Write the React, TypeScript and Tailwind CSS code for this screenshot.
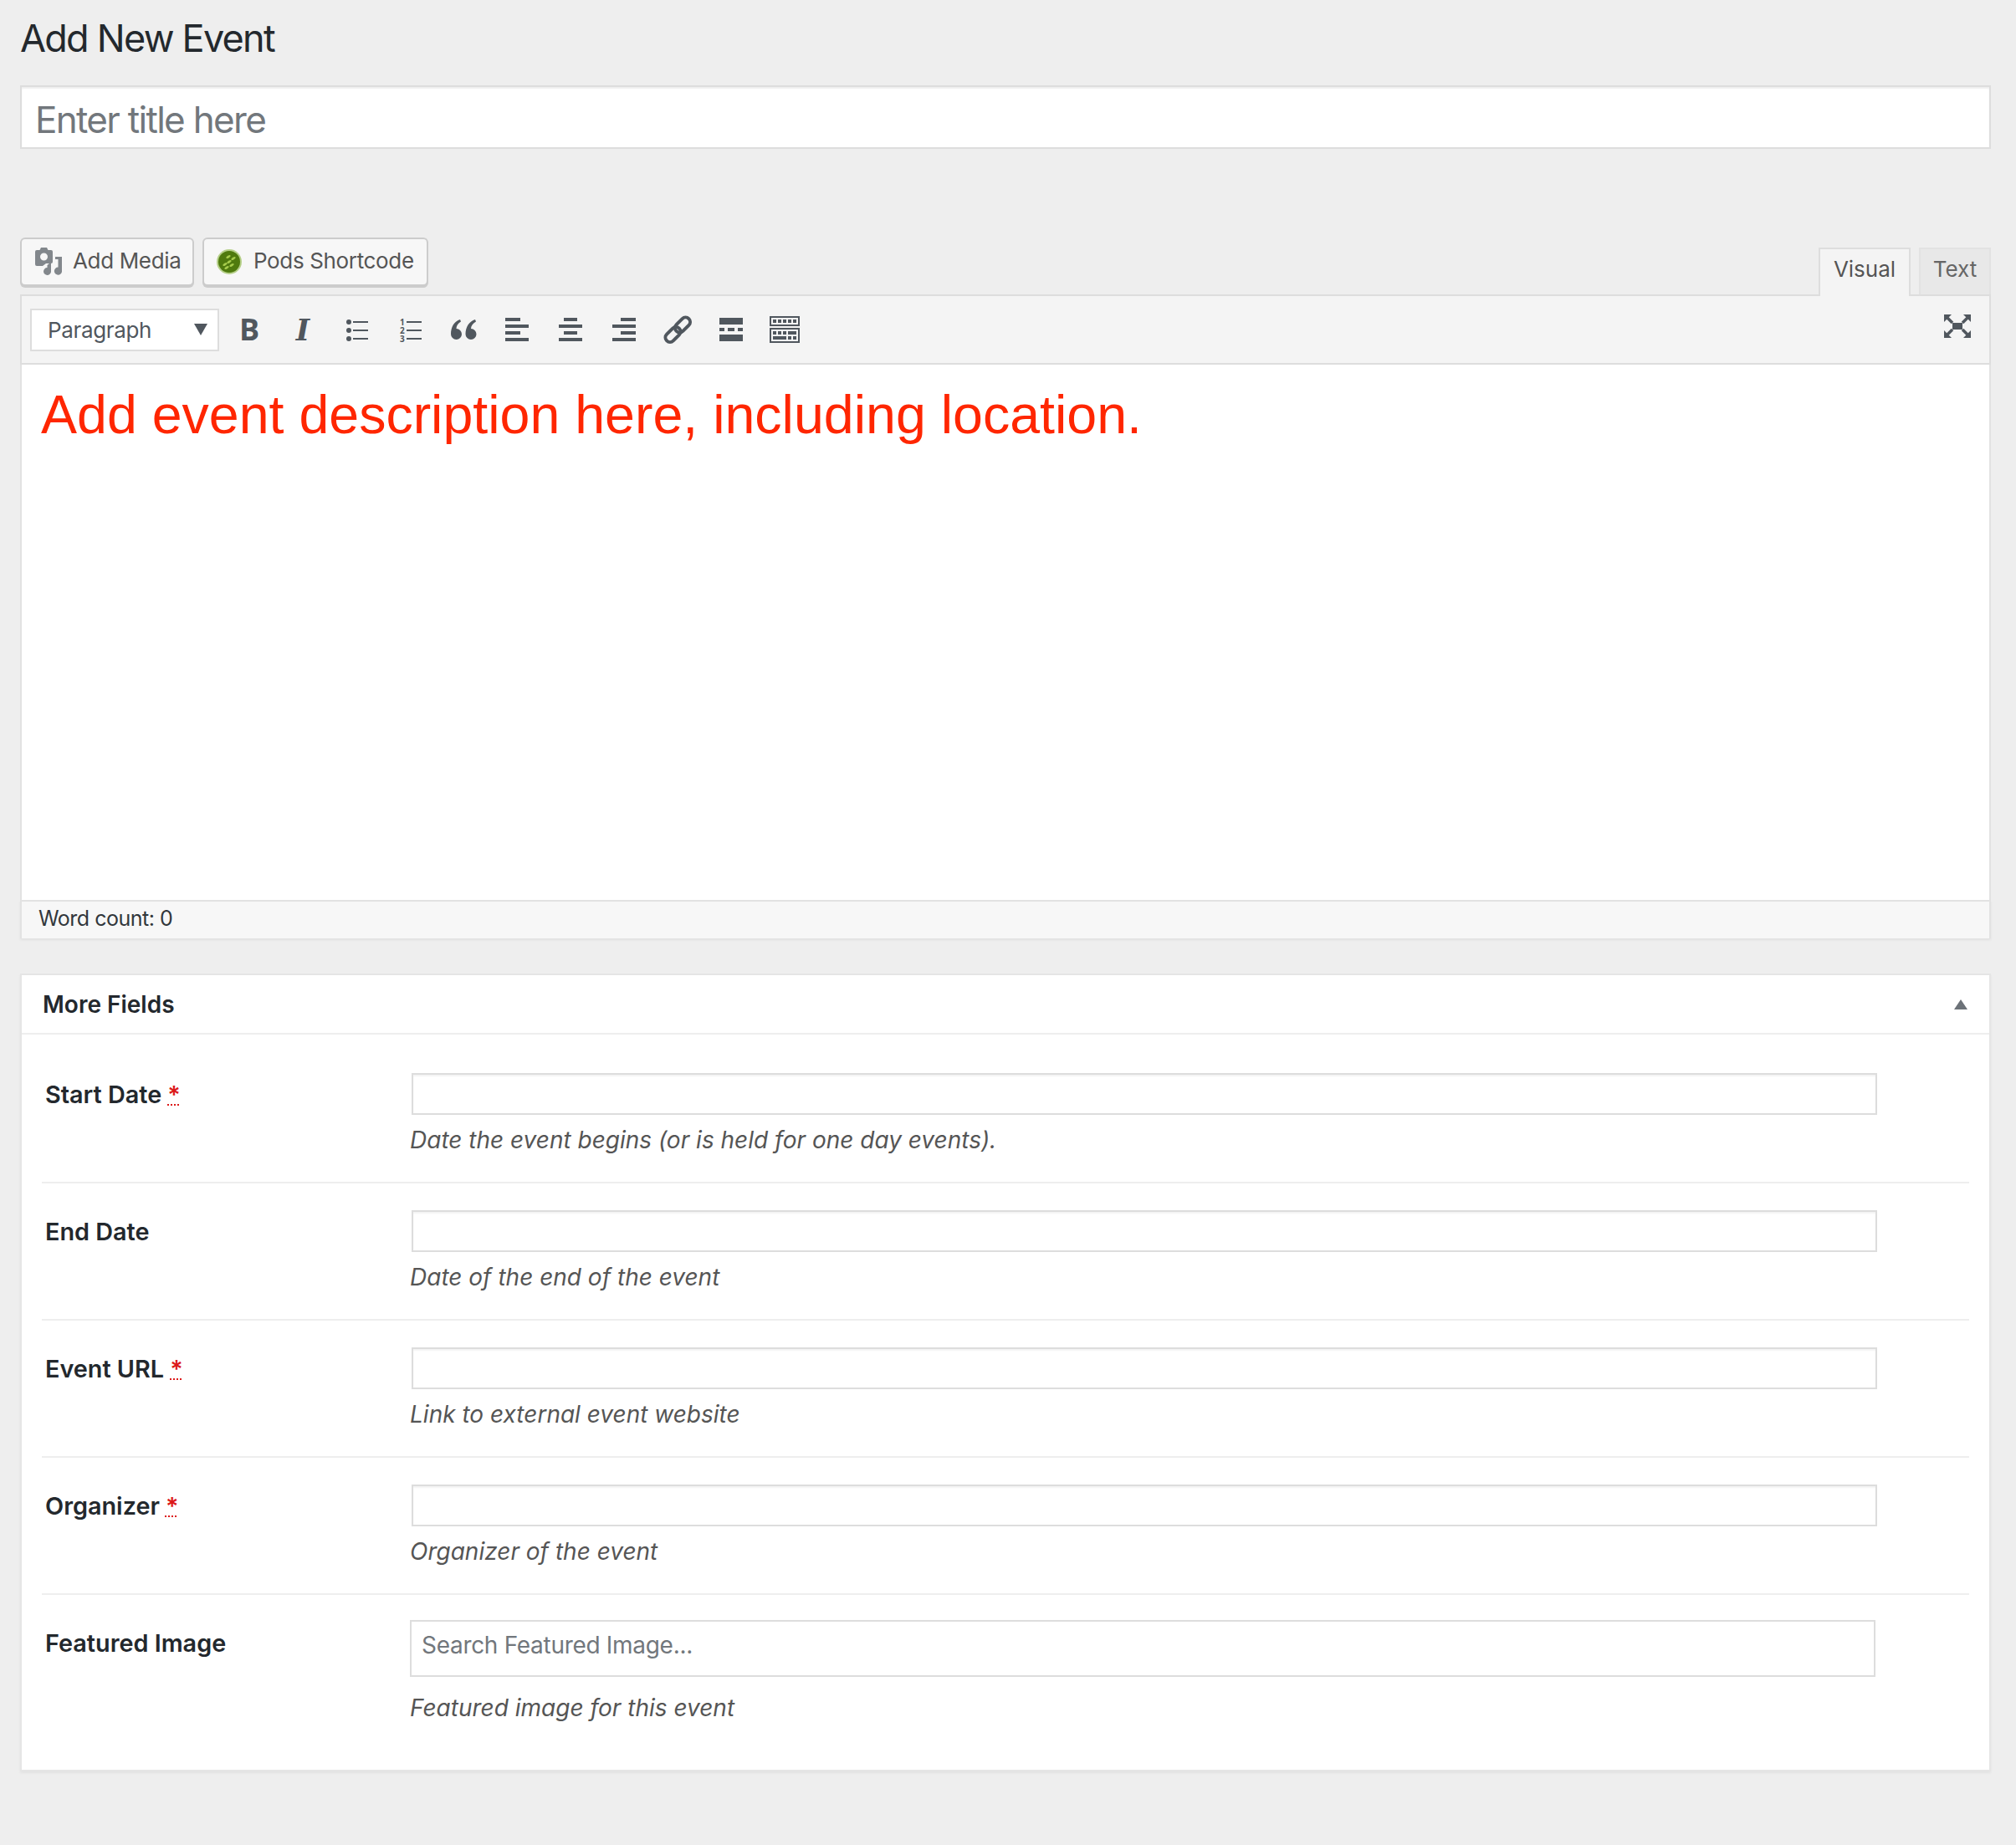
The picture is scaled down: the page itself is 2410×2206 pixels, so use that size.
import React from "react";

const rows = [
  { label: "Start Date", req: true, help: "Date the event begins (or is held for one day events)." },
  { label: "End Date", req: false, help: "Date of the end of the event" },
  { label: "Event URL", req: true, help: "Link to external event website" },
  { label: "Organizer", req: true, help: "Organizer of the event" },
];

const ICON = "#50575e";

function Box({ children }: { children?: React.ReactNode }) {
  return (
    <svg viewBox="0 0 40 40" className="w-[40px] h-[40px] shrink-0" fill={ICON}>
      {children}
    </svg>
  );
}

function Bars({ xs }: { xs: [number, number][] }) {
  return (
    <>
      {xs.map(([x, w], i) => (
        <rect key={i} x={x} y={6 + i * 8} width={w} height={4} />
      ))}
    </>
  );
}

function Toolbar() {
  return (
    <div className="flex items-center gap-[24px] ml-[16px]">
      <div className="w-[40px] h-[40px] shrink-0 flex items-center justify-center text-[#50575e] font-['Open_Sans',sans-serif] font-bold text-[36px] leading-none">
        B
      </div>
      <div className="w-[40px] h-[40px] shrink-0 flex items-center justify-center text-[#50575e] font-['DejaVu_Serif',serif] font-bold italic text-[35px] leading-none">
        I
      </div>
      <Box>
        <circle cx="11" cy="11" r="3" />
        <circle cx="11" cy="21" r="3" />
        <circle cx="11" cy="31" r="3" />
        <rect x="16" y="10" width="18" height="2" />
        <rect x="16" y="20" width="18" height="2" />
        <rect x="16" y="30" width="18" height="2" />
      </Box>
      <Box>
        <text x="8" y="14.5" fontSize="10" fontWeight="700" fontFamily="'Open Sans', sans-serif">1</text>
        <text x="8" y="24.5" fontSize="10" fontWeight="700" fontFamily="'Open Sans', sans-serif">2</text>
        <text x="8" y="34.5" fontSize="10" fontWeight="700" fontFamily="'Open Sans', sans-serif">3</text>
        <rect x="16" y="10" width="18" height="2" />
        <rect x="16" y="20" width="18" height="2" />
        <rect x="16" y="30" width="18" height="2" />
      </Box>
      <Box>
        <path d="M16 8 C9 10 5 17 5 25.5 A6.5 6.5 0 1 0 11.5 19 C11.5 15.5 13.5 12.5 17 10.5 Z" />
        <path d="M34 8 C27 10 22.5 17 22.5 25.5 A6.5 6.5 0 1 0 29 19 C29 15.5 31.5 12.5 35 10.5 Z" />
      </Box>
      <Box>
        <Bars xs={[[6, 18], [6, 28], [6, 18], [6, 28]]} />
      </Box>
      <Box>
        <Bars xs={[[12, 16], [6, 28], [12, 16], [6, 28]]} />
      </Box>
      <Box>
        <Bars xs={[[16, 18], [6, 28], [16, 18], [6, 28]]} />
      </Box>
      <Box>
        <g fill="none" stroke={ICON} strokeWidth="4">
          <rect x="-10.5" y="-5.5" width="21" height="11" rx="5.5" transform="translate(26 14.5) rotate(-45)" />
          <rect x="-10.5" y="-5.5" width="21" height="11" rx="5.5" transform="translate(14.5 26) rotate(-45)" />
        </g>
      </Box>
      <Box>
        <rect x="6" y="6" width="28" height="8" />
        <rect x="6" y="18" width="6" height="4" />
        <rect x="16" y="18" width="8" height="4" />
        <rect x="28" y="18" width="6" height="4" />
        <rect x="6" y="26" width="28" height="8" />
      </Box>
      <Box>
        <g transform="translate(2 4)">
          <rect x="1" y="1" width="34" height="10" fill="none" stroke={ICON} strokeWidth="2" />
          <rect x="1" y="15" width="34" height="16" fill="none" stroke={ICON} strokeWidth="2" />
          {[4, 10, 16, 22, 28].map((x) => (
            <rect key={x} x={x} y="4" width="4" height="4" />
          ))}
          {[4, 10, 16].map((x) => (
            <rect key={x} x={x} y="18" width="4" height="4" />
          ))}
          <rect x="22" y="18" width="10" height="4" />
          <rect x="4" y="24" width="16" height="4" />
          <rect x="22" y="24" width="4" height="4" />
          <rect x="28" y="24" width="4" height="4" />
        </g>
      </Box>
    </div>
  );
}

function MediaIcon() {
  return (
    <svg viewBox="0 0 32 33" className="w-[32px] h-[33px] shrink-0">
      <path
        fill="#82878c"
        fillRule="evenodd"
        d="M7 0 H14 L15.5 3 H19 Q21 3 21 5 V17 Q21 19 19 19 H13 L9 22 H2 Q0 22 0 20 V5 Q0 3 2 3 H5.5 Z M10.5 6.5 A4.5 4.5 0 1 0 10.5 15.5 A4.5 4.5 0 1 0 10.5 6.5 Z"
      />
      <path
        fill="#82878c"
        d="M24 11 H32 V27.5 A4.6 4.6 0 1 1 27.5 23.5 V14 H24 Z M19 15 V28 A4.5 4.5 0 1 1 14.5 24 V21 L17 19 Z"
      />
    </svg>
  );
}

function PodsIcon() {
  return (
    <svg viewBox="0 0 30 30" className="w-[30px] h-[30px] shrink-0">
      <circle cx="15" cy="15" r="15" fill="#7fae2e" opacity="0.55" />
      <circle cx="15" cy="15" r="13" fill="#4f7a0e" />
      <g fill="#a6cc4c">
        <ellipse cx="10" cy="18" rx="3" ry="1.3" transform="rotate(-30 10 18)" />
        <ellipse cx="15" cy="15" rx="3" ry="1.3" transform="rotate(-30 15 15)" />
        <ellipse cx="20" cy="11" rx="3" ry="1.3" transform="rotate(-30 20 11)" />
        <ellipse cx="12" cy="22" rx="3" ry="1.3" transform="rotate(-30 12 22)" />
        <ellipse cx="18" cy="19" rx="3" ry="1.3" transform="rotate(-30 18 19)" />
        <ellipse cx="14" cy="9" rx="3" ry="1.3" transform="rotate(-30 14 9)" />
      </g>
    </svg>
  );
}

const BTN =
  "h-[58px] flex items-center bg-[#f7f7f7] border-2 border-[#cccccc] rounded-[6px] shadow-[0_2px_0_#cccccc] text-[26px] tracking-[-0.35px] text-[#555555]";

export default function App() {
  return (
    <div className="min-h-[2206px] bg-[#eeeeee] pl-[24px] pr-[30px] font-['Inter',sans-serif] text-[#23282d]">
      <h1 className="h-[102px] pt-[19px] text-[45px] leading-[54px] font-normal tracking-[-1.75px]">Add New Event</h1>
      <input
        placeholder="Enter title here"
        className="block w-full h-[76px] bg-white border-2 border-[#dddddd] px-[16px] pt-[6px] text-[44px] tracking-[-1.7px] placeholder:text-[#72777c] shadow-[inset_0_2px_2px_rgba(0,0,0,0.07)] outline-none"
      />
      <div className="mt-[106px] h-[68px] flex justify-between items-start">
        <div className="flex gap-[10px]">
          <button className={BTN + " pl-[16px] pb-[1px] w-[208px] gap-[13px] shrink-0"}>
            <MediaIcon />
            <span className="-translate-y-[1px]">Add Media</span>
          </button>
          <button className={BTN + " pl-[15px] pb-[1px] w-[270px] gap-[14px] shrink-0"}>
            <PodsIcon />
            <span className="-translate-y-[1px]">Pods Shortcode</span>
          </button>
        </div>
        <div className="flex gap-[10px] mt-[12px] relative z-10">
          <div className="w-[110px] h-[58px] bg-[#f4f4f4] border-2 border-b-0 border-[#dddddd] text-[26px] text-[#555555] flex items-center justify-center pb-[9px]">
            Visual
          </div>
          <div className="w-[86px] h-[56px] bg-[#e8e8e8] border-2 border-b-0 border-[#e2e2e2] text-[26px] text-[#666666] flex items-center justify-center pb-[7px]">
            Text
          </div>
        </div>
      </div>
      <div className="h-[84px] bg-[#f4f4f4] border-2 border-[#dddddd] flex items-center pl-[10px] pr-[22px]">
        <div className="w-[226px] h-[51px] shrink-0 bg-white border-2 border-[#dddddd] flex items-center justify-between pl-[19px] pr-[12px] text-[26px] tracking-[-0.35px] text-[#50575e]">
          <span>Paragraph</span>
          <svg viewBox="0 0 16 14" className="w-[16px] h-[14px]">
            <polygon points="0,0 16,0 8,14" fill="#50575e" />
          </svg>
        </div>
        <Toolbar />
        <svg viewBox="0 0 32 28" className="w-[32px] h-[28px] ml-auto -translate-y-[4px]" fill={ICON}>
          <rect x="10" y="10" width="12" height="8" />
          <polygon points="0,0 9,0 0,9" />
          <polygon points="32,0 23,0 32,9" />
          <polygon points="0,28 9,28 0,19" />
          <polygon points="32,28 23,28 32,19" />
          <g stroke={ICON} strokeWidth="3.5">
            <line x1="3" y1="3" x2="10" y2="10" />
            <line x1="29" y1="3" x2="22" y2="10" />
            <line x1="3" y1="25" x2="10" y2="18" />
            <line x1="29" y1="25" x2="22" y2="18" />
          </g>
        </svg>
      </div>
      <div className="h-[640px] bg-white border-x-2 border-[#e2e2e2] pl-[23px] pt-[21px]">
        <p className="font-['Liberation_Sans',sans-serif] text-[64.5px] leading-[78px] text-[#ff2600]">
          Add event description here, including location.
        </p>
      </div>
      <div className="h-[46px] bg-[#f7f7f7] border-2 border-b-0 border-[#e2e2e2] pl-[20px] pb-[3px] flex items-center text-[25px] tracking-[-0.5px] text-[#32373c] shadow-[0_2px_3px_rgba(0,0,0,0.06)]">
        Word count: 0
      </div>
      <div className="mt-[42px] h-[954px] bg-white border-2 border-[#e5e5e5] shadow-[0_2px_3px_rgba(0,0,0,0.05)]">
        <div className="h-[71px] border-b-2 border-[#eeeeee] flex items-center justify-between pl-[25px] pr-[26px]">
          <h2 className="text-[28px] font-semibold">More Fields</h2>
          <svg viewBox="0 0 16 12" className="w-[16px] h-[12px]">
            <polygon points="8,0 16,12 0,12" fill="#6c7278" />
          </svg>
        </div>
        <div className="pt-[14px] ml-[24px] mr-[24px]">
          {rows.map((r) => (
            <div key={r.label} className="h-[164px] pt-[32px] border-b-2 border-[#eeeeee] flex">
              <div className="w-[440px] shrink-0 pl-[4px] pt-[1px] text-[28.8px] font-semibold leading-[50px]">
                {r.label}
                {r.req && (
                  <span className="ml-[7px] text-[#dc1a1a] underline decoration-dotted decoration-2">*</span>
                )}
              </div>
              <div className="flex-1 min-w-0">
                <input className="block w-[1752px] ml-[2px] h-[50px] bg-white border-2 border-[#dddddd] shadow-[inset_0_2px_2px_rgba(0,0,0,0.05)] outline-none" />
                <p className="mt-[10px] text-[28px] leading-[40px] italic text-[#555555]">{r.help}</p>
              </div>
            </div>
          ))}
          <div className="pt-[30px] flex">
            <div className="w-[440px] shrink-0 pl-[4px] text-[28.8px] font-semibold leading-[50px] pt-[3px]">Featured Image</div>
            <div className="flex-1 min-w-0">
              <input
                placeholder="Search Featured Image..."
                className="block w-[1752px] h-[68px] bg-white border-2 border-[#dddddd] px-[12px] pb-[8px] text-[28px] tracking-[-0.3px] placeholder:text-[#72777c] outline-none"
              />
              <p className="mt-[17px] text-[28px] leading-[40px] italic text-[#555555]">Featured image for this event</p>
            </div>
          </div>
        </div>
      </div>
    </div>
  );
}
